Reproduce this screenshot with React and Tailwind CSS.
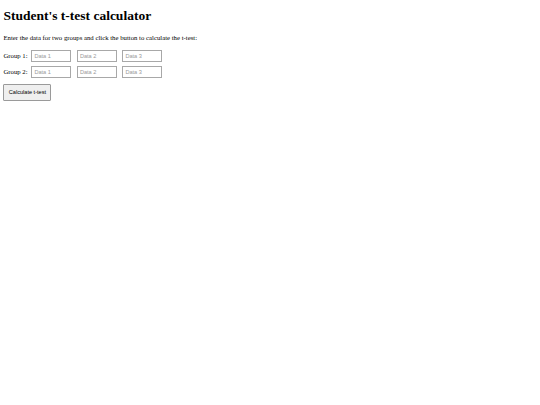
import React from 'react';

const GroupRow = ({ label }) => (
  <div className="flex items-center h-[12px]">
    <span className="text-[6.75px] leading-[8px] w-[28px] shrink-0 whitespace-nowrap">{label}</span>
    <div className="flex gap-[5.5px]">
      {['Data 1', 'Data 2', 'Data 3'].map((p) => (
        <input
          key={p}
          type="text"
          placeholder={p}
          className="w-[40px] h-[12px] border border-[#a8a8a8] bg-white px-[2px] text-[5.6px] font-['Liberation_Sans',Arial,sans-serif] placeholder:text-[#9a9a9a] outline-none"
        />
      ))}
    </div>
  </div>
);

export default function App() {
  return (
    <div className="min-h-screen bg-white text-black px-[3.4px] font-['Liberation_Serif','Times_New_Roman',serif]">
      <h1 className="pt-[8px] text-[13.5px] leading-[15px] font-bold">Student's t-test calculator</h1>
      <p className="mt-[10.5px] text-[6.75px] leading-[7.5px]">
        Enter the data for two groups and click the button to calculate the t-test:
      </p>

      <div className="mt-[9px] flex flex-col gap-[4px]">
        <GroupRow label="Group 1:" />
        <GroupRow label="Group 2:" />
      </div>

      <button
        type="button"
        className="mt-[6px] w-[48px] h-[17px] border border-[#9a9a9a] bg-[#efefef] rounded-[1px] text-[5.6px] font-['Liberation_Sans',Arial,sans-serif] text-black flex items-center justify-center"
      >
        Calculate t-test
      </button>
    </div>
  );
}
